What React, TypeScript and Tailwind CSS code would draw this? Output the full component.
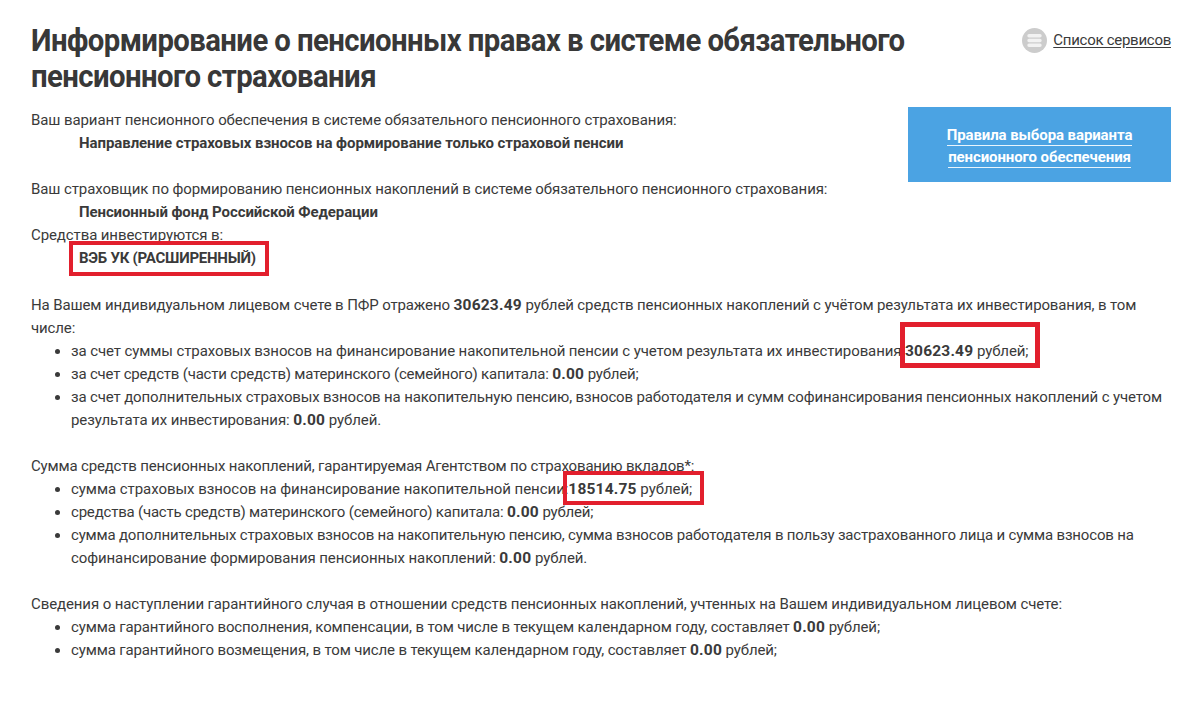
const Money = ({ value }: { value: string }) => (
  <>
    <b className="font-bold text-[15.5px] tracking-[0.2px] leading-none">{value}</b> рублей
  </>
);

const Marked = ({
  box,
  children,
}: {
  box: string;
  children: React.ReactNode;
}) => (
  <span className="relative">
    {children}
    <span className={"absolute border-[#e21f2d] " + box} />
  </span>
);

const Bullets = ({ children }: { children: React.ReactNode }) => (
  <ul className="list-disc pl-[40px] marker:text-[#3a3a3a]">{children}</ul>
);

export default function App() {
  return (
    <div
      className="min-h-[727px] bg-white text-[#3a3a3a] text-[15px] leading-[23px] tracking-[-0.1px] pl-[31px] pr-[30px] pt-[23px]"
      style={{ fontFamily: '"Roboto", "Liberation Sans", sans-serif' }}
    >
      <div className="flex justify-between items-start">
        <h1 className="text-[31px] leading-[36px] font-bold tracking-[-0.6px] text-[#383838] origin-left scale-x-[0.945]">
          Информирование о пенсионных правах в системе обязательного
          <br />
          пенсионного страхования
        </h1>
        <a className="flex items-center gap-[6px] mt-[5px] -mr-[1px] shrink-0" href="#">
          <svg width="25" height="25" viewBox="0 0 25 25">
            <circle cx="12.5" cy="12.5" r="12.5" fill="#cccccc" />
            <path d="M7 6h11a1 1 0 0 1 0 3.4H7a1 1 0 0 1 0-3.4zM7 10.8h11a1 1 0 0 1 0 3.4H7a1 1 0 0 1 0-3.4zM7 15.6h11a1 1 0 0 1 0 3.4H7a1 1 0 0 1 0-3.4z" fill="#f2f2f2" />
          </svg>
          <span className="underline underline-offset-2 tracking-[-0.27px]">Список сервисов</span>
        </a>
      </div>

      <div className="flex justify-between items-start mt-[14px]">
        <div>
          <p>Ваш вариант пенсионного обеспечения в системе обязательного пенсионного страхования:</p>
          <p className="pl-[48px] font-bold tracking-[-0.07px]">Направление страховых взносов на формирование только страховой пенсии</p>
          <p className="mt-[23px]">Ваш страховщик по формированию пенсионных накоплений в системе обязательного пенсионного страхования:</p>
          <p className="pl-[48px] font-bold">Пенсионный фонд Российской Федерации</p>
          <p>Средства инвестируются в:</p>
          <p className="pl-[48px] font-bold tracking-[-0.25px]">
            <Marked box="-left-[10px] -right-[13px] -top-[8px] -bottom-[9px] border-[4px]">ВЭБ УК (РАСШИРЕННЫЙ)</Marked>
          </p>
        </div>
        <a
          href="#"
          className="-mt-[2px] mr-[-1px] pt-[3px] flex flex-col items-center justify-center w-[263px] h-[75px] shrink-0 bg-[#4ba3e3] text-white font-bold"
        >
          <span className="leading-[20px] border-b border-[#e8f4fc] mb-[1px]">Правила выбора варианта</span>
          <span className="leading-[20px] border-b border-[#e8f4fc]">пенсионного обеспечения</span>
        </a>
      </div>

      <p className="mt-[24px] tracking-[-0.12px]">
        На Вашем индивидуальном лицевом счете в ПФР отражено <b className="text-[15.5px] tracking-[0.2px] leading-none">30623.49</b> рублей средств пенсионных накоплений с учётом результата их инвестирования, в том
        <br />
        числе:
      </p>
      <Bullets>
        <li>
          за счет суммы страховых взносов на финансирование накопительной пенсии с учетом результата их инвестирования:
          <Marked box="-left-[5px] -right-[12px] -top-[20px] -bottom-[8px] border-[5px]">
            <Money value="30623.49" />;
          </Marked>
        </li>
        <li className="tracking-[-0.2px]">
          за счет средств (части средств) материнского (семейного) капитала: <Money value="0.00" />;
        </li>
        <li>
          <span className="tracking-[-0.14px]">за счет дополнительных страховых взносов на накопительную пенсию, взносов работодателя и сумм софинансирования пенсионных накоплений с учетом</span>
          <br />
          результата их инвестирования: <Money value="0.00" />.
        </li>
      </Bullets>

      <p className="mt-[23px] tracking-[-0.17px]">Сумма средств пенсионных накоплений, гарантируемая Агентством по страхованию вкладов*:</p>
      <Bullets>
        <li className="tracking-[-0.05px]">
          сумма страховых взносов на финансирование накопительной пенсии:
          <Marked box="-left-[5px] -right-[12px] -top-[9px] -bottom-[7px] border-[4px]">
            <Money value="18514.75" />;
          </Marked>
        </li>
        <li className="tracking-[-0.2px]">
          средства (часть средств) материнского (семейного) капитала: <Money value="0.00" />;
        </li>
        <li>
          <span className="tracking-[-0.18px]">сумма дополнительных страховых взносов на накопительную пенсию, сумма взносов работодателя в пользу застрахованного лица и сумма взносов на</span>
          <br />
          софинансирование формирования пенсионных накоплений: <Money value="0.00" />.
        </li>
      </Bullets>

      <p className="mt-[23px]">Сведения о наступлении гарантийного случая в отношении средств пенсионных накоплений, учтенных на Вашем индивидуальном лицевом счете:</p>
      <Bullets>
        <li className="tracking-[-0.13px]">
          сумма гарантийного восполнения, компенсации, в том числе в текущем календарном году, составляет <Money value="0.00" />;
        </li>
        <li className="tracking-[-0.13px]">
          сумма гарантийного возмещения, в том числе в текущем календарном году, составляет <Money value="0.00" />;
        </li>
      </Bullets>
    </div>
  );
}
